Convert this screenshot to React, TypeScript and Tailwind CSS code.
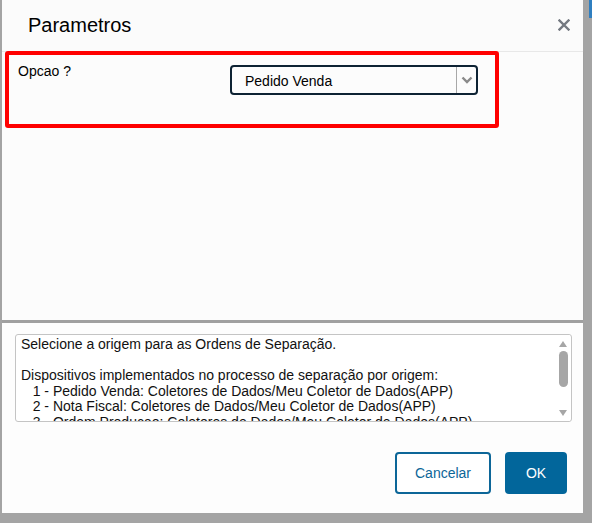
import React from "react";

export default function App() {
  const font = { fontFamily: '"Liberation Sans", Arial, sans-serif' };
  return (
    <div className="relative w-[592px] h-[523px] bg-[#a4a4a4] overflow-hidden" style={font}>
      <div className="absolute right-0 top-0 w-[3px] h-[18px] bg-[#2f7fc0]" />
      <div className="ml-[2px] w-[581px] h-[513px] bg-[#fbfbfb] flex flex-col">
        {/* Header */}
        <div className="h-[52px] shrink-0 flex items-center justify-between pl-[26px] pr-[13px] border-b border-[#e8e8e8]">
          <span className="text-[20px] text-black leading-none mt-[-2px]">Parametros</span>
          <svg width="12" height="12" viewBox="0 0 12 12" className="mt-[-1px]">
            <path d="M1.5 1.5 L10.5 10.5 M10.5 1.5 L1.5 10.5" stroke="#737880" strokeWidth="2.4" strokeLinecap="square" />
          </svg>
        </div>
        {/* Body */}
        <div className="h-[268px] shrink-0 border-r border-[#a0a0a0] mr-[-1px] bg-[#fcfcfc]">
          <div className="ml-[3px] mt-[-1px] w-[494px] h-[77px] border-[4px] border-[#ff0000] rounded-[3px] flex justify-between pl-[9px] pr-[17px] pt-[8px]">
            <span className="text-[14px] leading-[16px] text-black">Opcao ?</span>
            <div className="mt-[2px] w-[248px] h-[30px] border-2 border-[#0d2233] rounded-[4px] flex items-stretch bg-[#fcfcfc]">
              <div className="flex-1 flex items-center pl-[13px] pt-[2px] text-[14px] text-black">Pedido Venda</div>
              <div className="w-[20px] border-l border-[#a8a8a8] flex items-center justify-center">
                <svg width="12" height="8" viewBox="0 0 12 8">
                  <path d="M1.5 1.5 L6 6 L10.5 1.5" stroke="#8a8a8a" strokeWidth="2.4" fill="none" />
                </svg>
              </div>
            </div>
          </div>
        </div>
        <div className="h-[3px] shrink-0 bg-[#a0a0a0]" />
        {/* Bottom section */}
        <div className="flex-1 bg-[#fdfdfd] flex flex-col">
          <div className="relative ml-[13px] mt-[11px] w-[557px] h-[88px] border border-[#c4c4c4] rounded-[3px] bg-white overflow-hidden">
            <div className="pl-[5px] pt-[2px] text-[14px] leading-[15.6px] text-[#111] whitespace-pre">
              {"Selecione a origem para as Ordens de Separação.\n\nDispositivos implementados no processo de separação por origem:\n   1 - Pedido Venda: Coletores de Dados/Meu Coletor de Dados(APP)\n   2 - Nota Fiscal: Coletores de Dados/Meu Coletor de Dados(APP)\n   3 - Ordem Producao: Coletores de Dados/Meu Coletor de Dados(APP)"}
            </div>
            <div className="absolute right-[1px] top-0 bottom-0 w-[14px] bg-white flex flex-col items-center">
              <svg width="8" height="6" viewBox="0 0 8 6" className="mt-[6px]">
                <path d="M0 6 L4 0 L8 6 Z" fill="#a6a6a6" />
              </svg>
              <div className="mt-[4px] w-[9px] h-[36px] rounded-full bg-[#a6a6a6]" />
              <div className="flex-1" />
              <svg width="8" height="6" viewBox="0 0 8 6" className="mb-[5px]">
                <path d="M0 0 L8 0 L4 6 Z" fill="#a6a6a6" />
              </svg>
            </div>
          </div>
          <div className="flex justify-end gap-[14px] pr-[16px] mt-[30px]">
            <button className="w-[96px] h-[42px] border-2 border-[#0c6698] rounded-[4px] bg-white text-[#0c6698] text-[14px]">Cancelar</button>
            <button className="w-[62px] h-[42px] rounded-[4px] bg-[#02669b] text-white text-[14px]">OK</button>
          </div>
        </div>
      </div>
    </div>
  );
}
